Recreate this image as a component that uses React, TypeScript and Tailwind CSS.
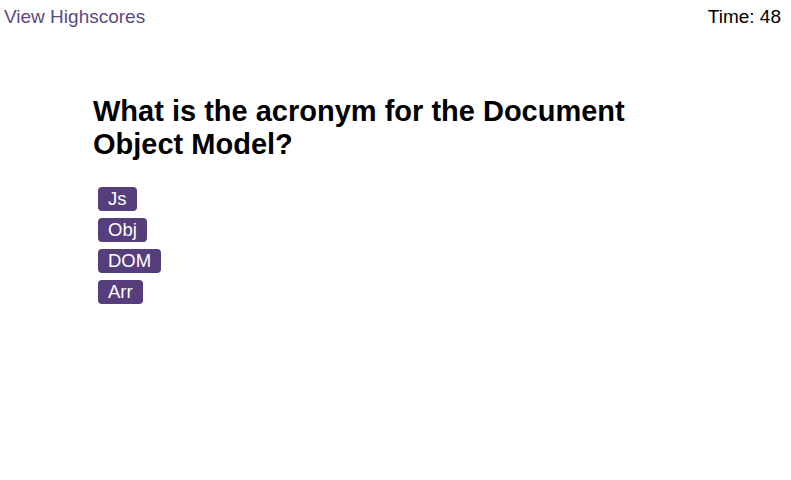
import React from "react";

const answers = ["Js", "Obj", "DOM", "Arr"];

export default function App() {
  return (
    <div className="min-h-[480px] bg-white font-['Liberation_Sans',Arial,sans-serif]">
      {/* Header */}
      <header className="flex justify-between pl-1 pr-2.5 pt-1.5 text-[19px] leading-[21px]">
        <a href="#" className="text-[#5b4a7f]">
          View Highscores
        </a>
        <span className="text-black">Time: 48</span>
      </header>

      {/* Quiz */}
      <main className="ml-[93px] mt-[68px] w-[600px]">
        <h1 className="text-[29px] font-bold leading-[33px] text-black">
          What is the acronym for the Document Object Model?
        </h1>
        <div className="mt-[26px] ml-[5px] flex flex-col items-start gap-[7px]">
          {answers.map((a) => (
            <button
              key={a}
              className="h-6 rounded-[4px] bg-[#563d7c] px-2.5 text-[18.5px] leading-6 text-white"
            >
              {a}
            </button>
          ))}
        </div>
      </main>
    </div>
  );
}
